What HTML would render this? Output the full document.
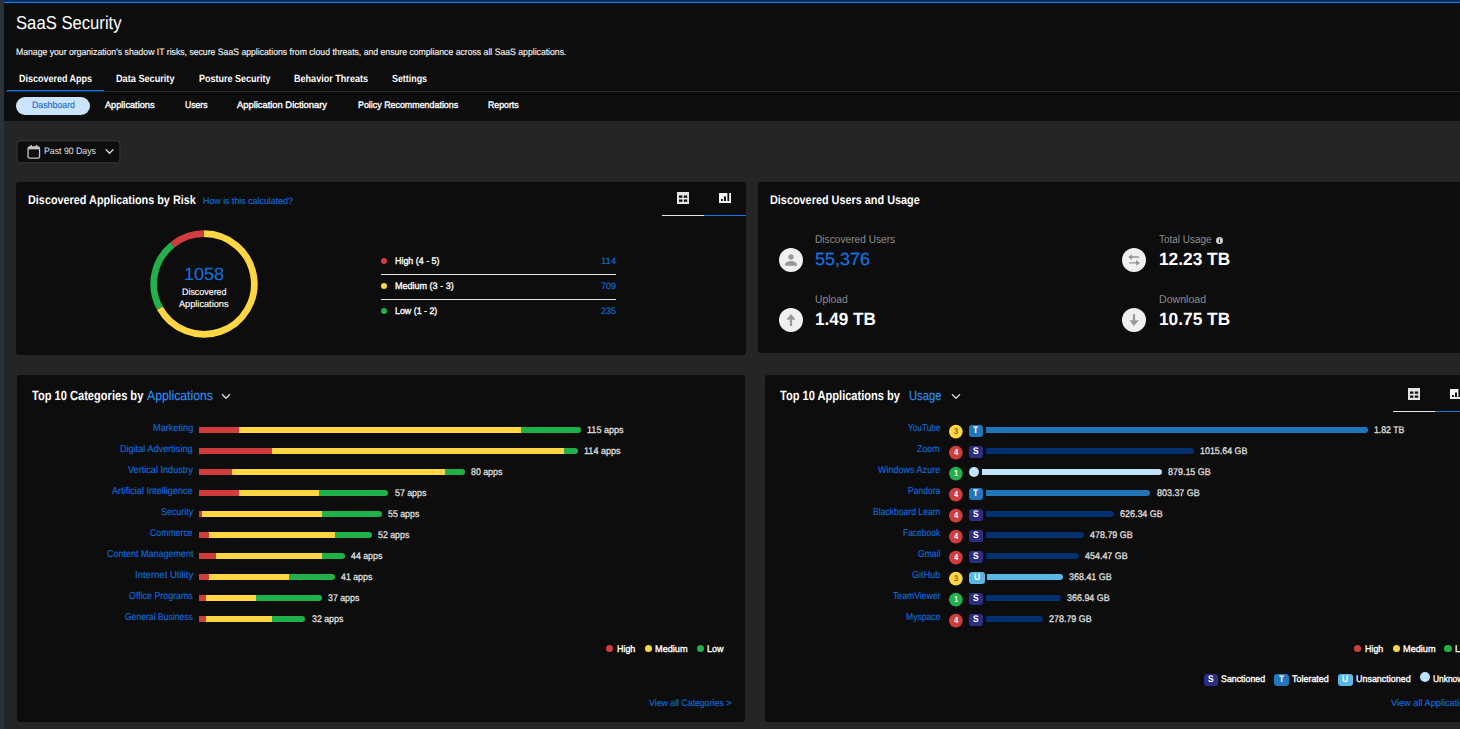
<!DOCTYPE html>
<html lang="en"><head><meta charset="utf-8"><title>SaaS Security</title>
<style>
html,body{margin:0;padding:0;background:#252525;}
body{width:1460px;height:729px;overflow:hidden;position:relative;font-family:"Liberation Sans", sans-serif;}
#app{position:absolute;left:0;top:0;width:1460px;height:729px;overflow:hidden;background:#252525;}
#app>div,#app>svg,#app>span{position:absolute;display:block;}
#app>span{white-space:nowrap;line-height:1;transform-origin:0 0;text-rendering:geometricPrecision;}
</style></head>
<body><div id="app">
<div style="left:0px;top:0px;width:1460px;height:121px;background:#0d0d0d;"></div>
<div style="left:0px;top:0px;width:1460px;height:2px;background:#032f6c;"></div>
<div style="left:0px;top:2px;width:1460px;height:1px;background:#1c80e4;"></div>
<div style="left:0px;top:0px;width:4px;height:729px;background:#2b3138;"></div>
<div style="left:4px;top:91px;width:1456px;height:1px;background:#282828;"></div>
<div style="left:7px;top:90px;width:97px;height:1px;background:#0a72dc;"></div>
<div style="left:7px;top:91px;width:97px;height:1px;background:#123a66;"></div>
<div style="left:16px;top:97px;width:74px;height:18px;background:#cbe3fb;border-radius:9px;"></div>
<svg style="left:16px;top:140px" width="106" height="25" viewBox="0 0 106 25"><rect x="1.1" y="0.9" width="102.8" height="21.9" rx="3.5" fill="#0d0d0d" stroke="#383838" stroke-width="1"/></svg>
<svg style="left:27px;top:144px" width="14" height="16" viewBox="0 0 14 16"><g transform="translate(0.2,0.75)"><rect x="0.85" y="2.2" width="11.5" height="11.2" rx="1.7" fill="none" stroke="#c4c4c4" stroke-width="1.3"/><rect x="0.85" y="2.2" width="11.5" height="2.4" fill="#c4c4c4"/><rect x="3.2" y="0.2" width="1.5" height="2.8" fill="#c4c4c4"/><rect x="8.6" y="0.2" width="1.5" height="2.8" fill="#c4c4c4"/></g></svg>
<svg style="left:104px;top:148px" width="11" height="8" viewBox="0 0 11 8"><path d="M1.7 1.4 L5.55 5.3 L9.4 1.4" fill="none" stroke="#e0e0e0" stroke-width="1.35"/></svg>
<div style="left:16px;top:182px;width:730px;height:173px;background:#0d0d0d;border-radius:3px;"></div>
<svg style="left:677px;top:192px" width="12" height="12" viewBox="0 0 12 12"><path fill="#e4e4e4" fill-rule="evenodd" d="M0 0h12v12H0z M2 3.6h3.4v2.2H2z M6.8 3.6h3.4v2.2H6.8z M2 7.6h3.4v2.2H2z M6.8 7.6h3.4v2.2H6.8z"/></svg>
<svg style="left:719px;top:193px" width="12" height="10" viewBox="0 0 12 10"><path fill="#f4f4f4" fill-rule="evenodd" d="M0 0h12v10H0z M2 6h1.8v2H2z M5 3.6h2v4.4H5z M8.4 0h1.8v8H8.4z"/></svg>
<div style="left:662px;top:215px;width:42px;height:1px;background:#e6e6e6;"></div>
<div style="left:704px;top:215px;width:42px;height:1px;background:#1277e0;"></div>
<svg style="left:144px;top:224px" width="120" height="120" viewBox="0 0 120 120"><path d="M60.00 9.70 A50.3 50.3 0 1 1 15.90 84.20" fill="none" stroke="#fed643" stroke-width="6.7"/><path d="M15.90 84.20 A50.3 50.3 0 0 1 28.49 20.79" fill="none" stroke="#21b14b" stroke-width="6.7"/><path d="M28.49 20.79 A50.3 50.3 0 0 1 59.99 9.70" fill="none" stroke="#d13c3c" stroke-width="6.7"/></svg>
<div style="left:381px;top:257.5px;width:6px;height:6px;background:#d13c3c;border-radius:50%;"></div>
<div style="left:381px;top:282.5px;width:6px;height:6px;background:#fed643;border-radius:50%;"></div>
<div style="left:381px;top:307.5px;width:6px;height:6px;background:#21b14b;border-radius:50%;"></div>
<div style="left:381px;top:274px;width:235px;height:1px;background:#e8e8e8;"></div>
<div style="left:381px;top:299px;width:235px;height:1px;background:#e8e8e8;"></div>
<div style="left:758px;top:182px;width:730px;height:171px;background:#0d0d0d;border-radius:3px;"></div>
<svg style="left:779px;top:248px" width="24" height="24" viewBox="0 0 24 24"><circle cx="12" cy="12" r="12" fill="#f0f0f0"/><circle cx="12" cy="9" r="2.7" fill="#989898"/><path d="M6.1 17.7v-1.2c0-2.3 2.9-3.5 5.9-3.5s5.9 1.2 5.9 3.5v1.2z" fill="#989898"/></svg>
<svg style="left:779px;top:308px" width="24" height="24" viewBox="0 0 24 24"><circle cx="12" cy="12" r="12" fill="#f0f0f0"/><path d="M12 6L16.6 11.7H13.1V17.9H10.9V11.7H7.4Z" fill="#989898"/></svg>
<svg style="left:1122px;top:248px" width="24" height="24" viewBox="0 0 24 24"><circle cx="12" cy="12" r="12" fill="#f0f0f0"/><path d="M6.2 9L9.9 6.2V8.3H16.9V9.7H9.9V11.8Z M17.9 14.9L14.2 12.1V14.2H7.1V15.6H14.2V17.7Z" fill="#929292"/></svg>
<svg style="left:1122px;top:308px" width="24" height="24" viewBox="0 0 24 24"><circle cx="12" cy="12" r="12" fill="#f0f0f0"/><path d="M12 18L16.6 12.3H13.1V6.3H10.9V12.3H7.4Z" fill="#989898"/></svg>
<svg style="left:1216px;top:237px" width="7" height="7" viewBox="0 0 7 7"><circle cx="3.5" cy="3.5" r="3.5" fill="#cfcfcf"/><rect x="3" y="3" width="1" height="2.5" fill="#111"/><rect x="3" y="1.5" width="1" height="1" fill="#111"/></svg>
<div style="left:17px;top:375px;width:728px;height:347px;background:#0d0d0d;border-radius:3px;"></div>
<svg style="left:221px;top:393px" width="10" height="7" viewBox="0 0 10 7"><path d="M1 1.2 L5 5.2 L9 1.2" fill="none" stroke="#d6d6d6" stroke-width="1.4"/></svg>
<div style="left:199px;top:427px;width:382.0px;height:6px;border-radius:0 3px 3px 0;overflow:hidden;background:linear-gradient(90deg,#d13c3c 0,#d13c3c 39.9px,#fed643 39.9px,#fed643 322.2px,#21b14b 322.2px)"></div>
<div style="left:199px;top:448px;width:378.7px;height:6px;border-radius:0 3px 3px 0;overflow:hidden;background:linear-gradient(90deg,#d13c3c 0,#d13c3c 73.1px,#fed643 73.1px,#fed643 365.4px,#21b14b 365.4px)"></div>
<div style="left:199px;top:469px;width:265.7px;height:6px;border-radius:0 3px 3px 0;overflow:hidden;background:linear-gradient(90deg,#d13c3c 0,#d13c3c 33.2px,#fed643 33.2px,#fed643 245.8px,#21b14b 245.8px)"></div>
<div style="left:199px;top:490px;width:189.3px;height:6px;border-radius:0 3px 3px 0;overflow:hidden;background:linear-gradient(90deg,#d13c3c 0,#d13c3c 39.9px,#fed643 39.9px,#fed643 119.6px,#21b14b 119.6px)"></div>
<div style="left:199px;top:511px;width:182.7px;height:6px;border-radius:0 3px 3px 0;overflow:hidden;background:linear-gradient(90deg,#d13c3c 0,#d13c3c 3.3px,#fed643 3.3px,#fed643 122.9px,#21b14b 122.9px)"></div>
<div style="left:199px;top:532px;width:172.7px;height:6px;border-radius:0 3px 3px 0;overflow:hidden;background:linear-gradient(90deg,#d13c3c 0,#d13c3c 10.0px,#fed643 10.0px,#fed643 136.2px,#21b14b 136.2px)"></div>
<div style="left:199px;top:553px;width:146.2px;height:6px;border-radius:0 3px 3px 0;overflow:hidden;background:linear-gradient(90deg,#d13c3c 0,#d13c3c 16.6px,#fed643 16.6px,#fed643 122.9px,#21b14b 122.9px)"></div>
<div style="left:199px;top:574px;width:136.2px;height:6px;border-radius:0 3px 3px 0;overflow:hidden;background:linear-gradient(90deg,#d13c3c 0,#d13c3c 10.0px,#fed643 10.0px,#fed643 89.7px,#21b14b 89.7px)"></div>
<div style="left:199px;top:595px;width:122.9px;height:6px;border-radius:0 3px 3px 0;overflow:hidden;background:linear-gradient(90deg,#d13c3c 0,#d13c3c 6.6px,#fed643 6.6px,#fed643 56.5px,#21b14b 56.5px)"></div>
<div style="left:199px;top:616px;width:106.3px;height:6px;border-radius:0 3px 3px 0;overflow:hidden;background:linear-gradient(90deg,#d13c3c 0,#d13c3c 6.6px,#fed643 6.6px,#fed643 73.1px,#21b14b 73.1px)"></div>
<div style="left:606.0px;top:645.0px;width:7.4px;height:7.4px;background:#d13c3c;border-radius:50%;"></div>
<div style="left:644.8px;top:645.0px;width:7.4px;height:7.4px;background:#fed643;border-radius:50%;"></div>
<div style="left:696.7px;top:645.0px;width:7.4px;height:7.4px;background:#21b14b;border-radius:50%;"></div>
<div style="left:765px;top:375px;width:712px;height:347px;background:#0d0d0d;border-radius:3px;"></div>
<svg style="left:950.5px;top:393px" width="10" height="7" viewBox="0 0 10 7"><path d="M1 1.2 L5 5.2 L9 1.2" fill="none" stroke="#d6d6d6" stroke-width="1.4"/></svg>
<svg style="left:1408px;top:388px" width="12" height="12" viewBox="0 0 12 12"><path fill="#e4e4e4" fill-rule="evenodd" d="M0 0h12v12H0z M2 3.6h3.4v2.2H2z M6.8 3.6h3.4v2.2H6.8z M2 7.6h3.4v2.2H2z M6.8 7.6h3.4v2.2H6.8z"/></svg>
<svg style="left:1450px;top:389px" width="12" height="10" viewBox="0 0 12 10"><path fill="#f4f4f4" fill-rule="evenodd" d="M0 0h12v10H0z M2 6h1.8v2H2z M5 3.6h2v4.4H5z M8.4 0h1.8v8H8.4z"/></svg>
<div style="left:1393px;top:411px;width:42px;height:1px;background:#e6e6e6;"></div>
<div style="left:1435px;top:411px;width:42px;height:1px;background:#1277e0;"></div>
<svg style="left:948px;top:424px" width="16" height="16" viewBox="0 0 16 16"><circle cx="7.85" cy="7.55" r="6.85" fill="#fed643"/></svg>
<div style="left:969px;top:425px;width:14px;height:12px;background:#2277bb;border-radius:3px;"></div>
<div style="left:985.7px;top:427px;width:382.0px;height:6px;background:#2176b8;border-radius:0 3px 3px 0;"></div>
<svg style="left:948px;top:445px" width="16" height="16" viewBox="0 0 16 16"><circle cx="7.85" cy="7.55" r="6.85" fill="#d13c3c"/></svg>
<div style="left:969px;top:446px;width:14px;height:12px;background:#2b2e83;border-radius:3px;"></div>
<div style="left:985.7px;top:448px;width:208.2px;height:6px;background:#03306e;border-radius:0 3px 3px 0;"></div>
<svg style="left:948px;top:466px" width="16" height="16" viewBox="0 0 16 16"><circle cx="7.85" cy="7.55" r="6.85" fill="#21b14b"/></svg>
<div style="left:969px;top:467px;width:10px;height:10px;background:#bfe3fb;border-radius:50%;"></div>
<div style="left:981.7px;top:469px;width:180.2px;height:6px;background:#bfe3fb;border-radius:0 3px 3px 0;"></div>
<svg style="left:948px;top:487px" width="16" height="16" viewBox="0 0 16 16"><circle cx="7.85" cy="7.55" r="6.85" fill="#d13c3c"/></svg>
<div style="left:969px;top:488px;width:14px;height:12px;background:#2277bb;border-radius:3px;"></div>
<div style="left:985.7px;top:490px;width:164.7px;height:6px;background:#2176b8;border-radius:0 3px 3px 0;"></div>
<svg style="left:948px;top:508px" width="16" height="16" viewBox="0 0 16 16"><circle cx="7.85" cy="7.55" r="6.85" fill="#d13c3c"/></svg>
<div style="left:969px;top:509px;width:14px;height:12px;background:#2b2e83;border-radius:3px;"></div>
<div style="left:985.7px;top:511px;width:128.4px;height:6px;background:#03306e;border-radius:0 3px 3px 0;"></div>
<svg style="left:948px;top:529px" width="16" height="16" viewBox="0 0 16 16"><circle cx="7.85" cy="7.55" r="6.85" fill="#d13c3c"/></svg>
<div style="left:969px;top:530px;width:14px;height:12px;background:#2b2e83;border-radius:3px;"></div>
<div style="left:985.7px;top:532px;width:98.1px;height:6px;background:#03306e;border-radius:0 3px 3px 0;"></div>
<svg style="left:948px;top:550px" width="16" height="16" viewBox="0 0 16 16"><circle cx="7.85" cy="7.55" r="6.85" fill="#d13c3c"/></svg>
<div style="left:969px;top:551px;width:14px;height:12px;background:#2b2e83;border-radius:3px;"></div>
<div style="left:985.7px;top:553px;width:93.2px;height:6px;background:#03306e;border-radius:0 3px 3px 0;"></div>
<svg style="left:948px;top:571px" width="16" height="16" viewBox="0 0 16 16"><circle cx="7.85" cy="7.55" r="6.85" fill="#fed643"/></svg>
<div style="left:969px;top:572px;width:16px;height:12px;background:#5bb7e6;border-radius:3px;"></div>
<div style="left:987.3px;top:574px;width:75.5px;height:6px;background:#5bb7e6;border-radius:0 3px 3px 0;"></div>
<svg style="left:948px;top:592px" width="16" height="16" viewBox="0 0 16 16"><circle cx="7.85" cy="7.55" r="6.85" fill="#21b14b"/></svg>
<div style="left:969px;top:593px;width:14px;height:12px;background:#2b2e83;border-radius:3px;"></div>
<div style="left:985.7px;top:595px;width:75.2px;height:6px;background:#03306e;border-radius:0 3px 3px 0;"></div>
<svg style="left:948px;top:613px" width="16" height="16" viewBox="0 0 16 16"><circle cx="7.85" cy="7.55" r="6.85" fill="#d13c3c"/></svg>
<div style="left:969px;top:614px;width:14px;height:12px;background:#2b2e83;border-radius:3px;"></div>
<div style="left:985.7px;top:616px;width:57.1px;height:6px;background:#03306e;border-radius:0 3px 3px 0;"></div>
<div style="left:1353.7px;top:645.0999999999999px;width:7.4px;height:7.4px;background:#d13c3c;border-radius:50%;"></div>
<div style="left:1392.5px;top:645.0999999999999px;width:7.4px;height:7.4px;background:#fed643;border-radius:50%;"></div>
<div style="left:1444.4px;top:645.0999999999999px;width:7.4px;height:7.4px;background:#21b14b;border-radius:50%;"></div>
<div style="left:1204px;top:674px;width:14px;height:12px;background:#2b2e83;border-radius:3px;"></div>
<div style="left:1274px;top:674px;width:15px;height:12px;background:#2277bb;border-radius:3px;"></div>
<div style="left:1338px;top:674px;width:15px;height:12px;background:#5bb7e6;border-radius:3px;"></div>
<div style="left:1420px;top:672px;width:10px;height:10px;background:#bfe3fb;border-radius:50%;"></div>
<span style="left:16.4px;top:14px;font-size:18.6px;color:#ffffff;transform:scaleX(0.896)">SaaS Security</span>
<span style="left:16.4px;top:47px;font-size:9.4px;-webkit-text-stroke:0.15px;color:#f2f2f2;transform:scaleX(0.924)">Manage your organization&#x27;s shadow IT risks, secure SaaS applications from cloud threats, and ensure compliance across all SaaS applications.</span>
<span style="left:19.0px;top:75px;font-size:10.4px;font-weight:700;color:#ffffff;transform:scaleX(0.864)">Discovered Apps</span>
<span style="left:116.0px;top:75px;font-size:10.4px;font-weight:700;color:#ffffff;transform:scaleX(0.881)">Data Security</span>
<span style="left:198.5px;top:75px;font-size:10.4px;font-weight:700;color:#ffffff;transform:scaleX(0.866)">Posture Security</span>
<span style="left:294.0px;top:75px;font-size:10.4px;font-weight:700;color:#ffffff;transform:scaleX(0.872)">Behavior Threats</span>
<span style="left:392.0px;top:75px;font-size:10.4px;font-weight:700;color:#ffffff;transform:scaleX(0.854)">Settings</span>
<span style="left:31.5px;top:100px;font-size:9.4px;-webkit-text-stroke:0.15px;color:#1a6ccc;transform:scaleX(0.937)">Dashboard</span>
<span style="left:104.5px;top:100px;font-size:9.4px;-webkit-text-stroke:0.35px;color:#ffffff;transform:scaleX(0.979)">Applications</span>
<span style="left:184.5px;top:100px;font-size:9.4px;-webkit-text-stroke:0.35px;color:#ffffff;transform:scaleX(0.919)">Users</span>
<span style="left:237.0px;top:100px;font-size:9.4px;-webkit-text-stroke:0.35px;color:#ffffff;transform:scaleX(0.998)">Application Dictionary</span>
<span style="left:357.5px;top:100px;font-size:9.4px;-webkit-text-stroke:0.35px;color:#ffffff;transform:scaleX(0.947)">Policy Recommendations</span>
<span style="left:488.0px;top:100px;font-size:9.4px;-webkit-text-stroke:0.35px;color:#ffffff;transform:scaleX(0.935)">Reports</span>
<span style="left:44.0px;top:146px;font-size:9.4px;color:#e0e0e0;transform:scaleX(0.932)">Past 90 Days</span>
<span style="left:28.1px;top:194px;font-size:12.5px;font-weight:700;color:#ffffff;transform:scaleX(0.868)">Discovered Applications by Risk</span>
<span style="left:202.5px;top:196px;font-size:9.4px;-webkit-text-stroke:0.15px;color:#0d6bdd;transform:scaleX(0.943)">How is this calculated?</span>
<span style="left:183.9px;top:266px;font-size:17.7px;color:#1075e6;transform:scaleX(1.019)">1058</span>
<span style="left:181.8px;top:287px;font-size:9.4px;-webkit-text-stroke:0.15px;color:#ffffff;transform:scaleX(0.949)">Discovered</span>
<span style="left:179.2px;top:299px;font-size:9.4px;-webkit-text-stroke:0.15px;color:#ffffff;transform:scaleX(0.979)">Applications</span>
<span style="left:395.0px;top:256px;font-size:9.4px;-webkit-text-stroke:0.35px;color:#ffffff;transform:scaleX(0.949)">High (4 - 5)</span>
<span style="left:600.5px;top:256px;font-size:9.4px;-webkit-text-stroke:0.15px;color:#0d6bdd;transform:scaleX(1.010)">114</span>
<span style="left:395.0px;top:281px;font-size:9.4px;-webkit-text-stroke:0.35px;color:#ffffff;transform:scaleX(0.963)">Medium (3 - 3)</span>
<span style="left:600.5px;top:281px;font-size:9.4px;-webkit-text-stroke:0.15px;color:#0d6bdd;transform:scaleX(0.964)">709</span>
<span style="left:395.0px;top:306px;font-size:9.4px;-webkit-text-stroke:0.35px;color:#ffffff;transform:scaleX(0.944)">Low (1 - 2)</span>
<span style="left:600.5px;top:306px;font-size:9.4px;-webkit-text-stroke:0.15px;color:#0d6bdd;transform:scaleX(0.964)">235</span>
<span style="left:769.8px;top:194px;font-size:12.5px;font-weight:700;color:#ffffff;transform:scaleX(0.869)">Discovered Users and Usage</span>
<span style="left:815.0px;top:235px;font-size:11.4px;color:#8d8d8d;transform:scaleX(0.892)">Discovered Users</span>
<span style="left:815.0px;top:251px;font-size:17.7px;-webkit-text-stroke:0.15px;color:#1075e6;transform:scaleX(1.016)">55,376</span>
<span style="left:815.0px;top:295px;font-size:11.4px;color:#8d8d8d;transform:scaleX(0.906)">Upload</span>
<span style="left:815.0px;top:311px;font-size:17.7px;font-weight:700;color:#ffffff;transform:scaleX(0.969)">1.49 TB</span>
<span style="left:1159.2px;top:235px;font-size:11.4px;color:#8d8d8d;transform:scaleX(0.874)">Total Usage</span>
<span style="left:1159.2px;top:251px;font-size:17.7px;font-weight:700;color:#ffffff;transform:scaleX(0.978)">12.23 TB</span>
<span style="left:1159.2px;top:295px;font-size:11.4px;color:#8d8d8d;transform:scaleX(0.930)">Download</span>
<span style="left:1159.2px;top:311px;font-size:17.7px;font-weight:700;color:#ffffff;transform:scaleX(0.978)">10.75 TB</span>
<span style="left:32.0px;top:389px;font-size:13.4px;font-weight:700;color:#ffffff;transform:scaleX(0.828)">Top 10 Categories by</span>
<span style="left:147.3px;top:389px;font-size:13.4px;-webkit-text-stroke:0.15px;color:#2f8df5;transform:scaleX(0.913)">Applications</span>
<span style="left:152.7px;top:424px;font-size:10px;-webkit-text-stroke:0.15px;color:#0d6bdd;transform:scaleX(0.918)">Marketing</span>
<span style="left:587.2px;top:426px;font-size:9.6px;-webkit-text-stroke:0.35px;color:#dadada;transform:scaleX(0.942)">115 apps</span>
<span style="left:120.4px;top:445px;font-size:10px;-webkit-text-stroke:0.15px;color:#0d6bdd;transform:scaleX(0.913)">Digital Advertising</span>
<span style="left:583.9px;top:447px;font-size:9.6px;-webkit-text-stroke:0.35px;color:#dadada;transform:scaleX(0.942)">114 apps</span>
<span style="left:128.0px;top:466px;font-size:10px;-webkit-text-stroke:0.15px;color:#0d6bdd;transform:scaleX(0.913)">Vertical Industry</span>
<span style="left:470.9px;top:468px;font-size:9.6px;-webkit-text-stroke:0.35px;color:#dadada;transform:scaleX(0.917)">80 apps</span>
<span style="left:112.3px;top:487px;font-size:10px;-webkit-text-stroke:0.15px;color:#0d6bdd;transform:scaleX(0.913)">Artificial Intelligence</span>
<span style="left:394.5px;top:489px;font-size:9.6px;-webkit-text-stroke:0.35px;color:#dadada;transform:scaleX(0.917)">57 apps</span>
<span style="left:160.8px;top:508px;font-size:10px;-webkit-text-stroke:0.15px;color:#0d6bdd;transform:scaleX(0.891)">Security</span>
<span style="left:387.9px;top:510px;font-size:9.6px;-webkit-text-stroke:0.35px;color:#dadada;transform:scaleX(0.917)">55 apps</span>
<span style="left:150.3px;top:529px;font-size:10px;-webkit-text-stroke:0.15px;color:#0d6bdd;transform:scaleX(0.873)">Commerce</span>
<span style="left:377.9px;top:531px;font-size:9.6px;-webkit-text-stroke:0.35px;color:#dadada;transform:scaleX(0.917)">52 apps</span>
<span style="left:106.5px;top:550px;font-size:10px;-webkit-text-stroke:0.15px;color:#0d6bdd;transform:scaleX(0.899)">Content Management</span>
<span style="left:351.4px;top:552px;font-size:9.6px;-webkit-text-stroke:0.35px;color:#dadada;transform:scaleX(0.917)">44 apps</span>
<span style="left:134.8px;top:571px;font-size:10px;-webkit-text-stroke:0.15px;color:#0d6bdd;transform:scaleX(0.952)">Internet Utility</span>
<span style="left:341.4px;top:573px;font-size:9.6px;-webkit-text-stroke:0.35px;color:#dadada;transform:scaleX(0.917)">41 apps</span>
<span style="left:129.3px;top:592px;font-size:10px;-webkit-text-stroke:0.15px;color:#0d6bdd;transform:scaleX(0.884)">Office Programs</span>
<span style="left:328.1px;top:594px;font-size:9.6px;-webkit-text-stroke:0.35px;color:#dadada;transform:scaleX(0.917)">37 apps</span>
<span style="left:125.2px;top:613px;font-size:10px;-webkit-text-stroke:0.15px;color:#0d6bdd;transform:scaleX(0.859)">General Business</span>
<span style="left:311.5px;top:615px;font-size:9.6px;-webkit-text-stroke:0.35px;color:#dadada;transform:scaleX(0.917)">32 apps</span>
<span style="left:617.0px;top:645px;font-size:9.5px;-webkit-text-stroke:0.35px;color:#ffffff;transform:scaleX(0.936)">High</span>
<span style="left:655.2px;top:645px;font-size:9.5px;-webkit-text-stroke:0.35px;color:#ffffff;transform:scaleX(0.965)">Medium</span>
<span style="left:707.0px;top:645px;font-size:9.5px;-webkit-text-stroke:0.35px;color:#ffffff;transform:scaleX(0.946)">Low</span>
<span style="left:649.4px;top:699px;font-size:9.5px;-webkit-text-stroke:0.15px;color:#0d6bdd;transform:scaleX(0.922)">View all Categories &gt;</span>
<span style="left:779.5px;top:389px;font-size:13.4px;font-weight:700;color:#ffffff;transform:scaleX(0.827)">Top 10 Applications by</span>
<span style="left:909.3px;top:389px;font-size:13.4px;-webkit-text-stroke:0.15px;color:#2f8df5;transform:scaleX(0.837)">Usage</span>
<span style="left:907.5px;top:424px;font-size:10px;-webkit-text-stroke:0.15px;color:#0d6bdd;transform:scaleX(0.827)">YouTube</span>
<span style="left:953.9px;top:427px;font-size:8.6px;font-weight:700;color:#8a6410;transform:scaleX(0.888)">3</span>
<span style="left:973.4px;top:426px;font-size:9.5px;font-weight:700;color:#fff;transform:scaleX(0.888)">T</span>
<span style="left:1374.0px;top:426px;font-size:9.6px;-webkit-text-stroke:0.35px;color:#dadada;transform:scaleX(0.909)">1.82 TB</span>
<span style="left:917.4px;top:445px;font-size:10px;-webkit-text-stroke:0.15px;color:#0d6bdd;transform:scaleX(0.884)">Zoom</span>
<span style="left:953.9px;top:448px;font-size:8.6px;font-weight:700;color:#fff;transform:scaleX(0.888)">4</span>
<span style="left:973.2px;top:447px;font-size:9.5px;font-weight:700;color:#fff;transform:scaleX(0.888)">S</span>
<span style="left:1200.2px;top:447px;font-size:9.6px;-webkit-text-stroke:0.35px;color:#dadada;transform:scaleX(0.927)">1015.64 GB</span>
<span style="left:877.8px;top:466px;font-size:10px;-webkit-text-stroke:0.15px;color:#0d6bdd;transform:scaleX(0.902)">Windows Azure</span>
<span style="left:953.9px;top:469px;font-size:8.6px;font-weight:700;color:#fff;transform:scaleX(0.888)">1</span>
<span style="left:1168.2px;top:468px;font-size:9.6px;-webkit-text-stroke:0.35px;color:#dadada;transform:scaleX(0.931)">879.15 GB</span>
<span style="left:907.8px;top:487px;font-size:10px;-webkit-text-stroke:0.15px;color:#0d6bdd;transform:scaleX(0.852)">Pandora</span>
<span style="left:953.9px;top:490px;font-size:8.6px;font-weight:700;color:#fff;transform:scaleX(0.888)">4</span>
<span style="left:973.4px;top:489px;font-size:9.5px;font-weight:700;color:#fff;transform:scaleX(0.888)">T</span>
<span style="left:1156.7px;top:489px;font-size:9.6px;-webkit-text-stroke:0.35px;color:#dadada;transform:scaleX(0.931)">803.37 GB</span>
<span style="left:872.7px;top:508px;font-size:10px;-webkit-text-stroke:0.15px;color:#0d6bdd;transform:scaleX(0.859)">Blackboard Learn</span>
<span style="left:953.9px;top:511px;font-size:8.6px;font-weight:700;color:#fff;transform:scaleX(0.888)">4</span>
<span style="left:973.2px;top:510px;font-size:9.5px;font-weight:700;color:#fff;transform:scaleX(0.888)">S</span>
<span style="left:1120.4px;top:510px;font-size:9.6px;-webkit-text-stroke:0.35px;color:#dadada;transform:scaleX(0.931)">626.34 GB</span>
<span style="left:902.9px;top:529px;font-size:10px;-webkit-text-stroke:0.15px;color:#0d6bdd;transform:scaleX(0.845)">Facebook</span>
<span style="left:953.9px;top:532px;font-size:8.6px;font-weight:700;color:#fff;transform:scaleX(0.888)">4</span>
<span style="left:973.2px;top:531px;font-size:9.5px;font-weight:700;color:#fff;transform:scaleX(0.888)">S</span>
<span style="left:1090.1px;top:531px;font-size:9.6px;-webkit-text-stroke:0.35px;color:#dadada;transform:scaleX(0.931)">478.79 GB</span>
<span style="left:917.7px;top:550px;font-size:10px;-webkit-text-stroke:0.15px;color:#0d6bdd;transform:scaleX(0.854)">Gmail</span>
<span style="left:953.9px;top:553px;font-size:8.6px;font-weight:700;color:#fff;transform:scaleX(0.888)">4</span>
<span style="left:973.2px;top:552px;font-size:9.5px;font-weight:700;color:#fff;transform:scaleX(0.888)">S</span>
<span style="left:1085.2px;top:552px;font-size:9.6px;-webkit-text-stroke:0.35px;color:#dadada;transform:scaleX(0.931)">454.47 GB</span>
<span style="left:911.6px;top:571px;font-size:10px;-webkit-text-stroke:0.15px;color:#0d6bdd;transform:scaleX(0.912)">GitHub</span>
<span style="left:953.9px;top:574px;font-size:8.6px;font-weight:700;color:#8a6410;transform:scaleX(0.888)">3</span>
<span style="left:973.9px;top:573px;font-size:9.5px;font-weight:700;color:#fff;transform:scaleX(0.888)">U</span>
<span style="left:1069.1px;top:573px;font-size:9.6px;-webkit-text-stroke:0.35px;color:#dadada;transform:scaleX(0.931)">368.41 GB</span>
<span style="left:892.5px;top:592px;font-size:10px;-webkit-text-stroke:0.15px;color:#0d6bdd;transform:scaleX(0.866)">TeamViewer</span>
<span style="left:953.9px;top:595px;font-size:8.6px;font-weight:700;color:#fff;transform:scaleX(0.888)">1</span>
<span style="left:973.2px;top:594px;font-size:9.5px;font-weight:700;color:#fff;transform:scaleX(0.888)">S</span>
<span style="left:1067.2px;top:594px;font-size:9.6px;-webkit-text-stroke:0.35px;color:#dadada;transform:scaleX(0.931)">366.94 GB</span>
<span style="left:905.6px;top:613px;font-size:10px;-webkit-text-stroke:0.15px;color:#0d6bdd;transform:scaleX(0.860)">Myspace</span>
<span style="left:953.9px;top:616px;font-size:8.6px;font-weight:700;color:#fff;transform:scaleX(0.888)">4</span>
<span style="left:973.2px;top:615px;font-size:9.5px;font-weight:700;color:#fff;transform:scaleX(0.888)">S</span>
<span style="left:1049.1px;top:615px;font-size:9.6px;-webkit-text-stroke:0.35px;color:#dadada;transform:scaleX(0.931)">278.79 GB</span>
<span style="left:1364.7px;top:645px;font-size:9.5px;-webkit-text-stroke:0.35px;color:#ffffff;transform:scaleX(0.936)">High</span>
<span style="left:1402.9px;top:645px;font-size:9.5px;-webkit-text-stroke:0.35px;color:#ffffff;transform:scaleX(0.965)">Medium</span>
<span style="left:1454.7px;top:645px;font-size:9.5px;-webkit-text-stroke:0.35px;color:#ffffff;transform:scaleX(0.946)">Low</span>
<span style="left:1208.2px;top:675px;font-size:9.5px;font-weight:700;color:#fff;transform:scaleX(0.888)">S</span>
<span style="left:1221.2px;top:675px;font-size:9.5px;-webkit-text-stroke:0.35px;color:#ffffff;transform:scaleX(0.928)">Sanctioned</span>
<span style="left:1278.9px;top:675px;font-size:9.5px;font-weight:700;color:#fff;transform:scaleX(0.888)">T</span>
<span style="left:1292.2px;top:675px;font-size:9.5px;-webkit-text-stroke:0.35px;color:#ffffff;transform:scaleX(0.941)">Tolerated</span>
<span style="left:1342.4px;top:675px;font-size:9.5px;font-weight:700;color:#fff;transform:scaleX(0.888)">U</span>
<span style="left:1356.4px;top:675px;font-size:9.5px;-webkit-text-stroke:0.35px;color:#ffffff;transform:scaleX(0.940)">Unsanctioned</span>
<span style="left:1432.8px;top:675px;font-size:9.5px;-webkit-text-stroke:0.35px;color:#ffffff;transform:scaleX(0.884)">Unknown</span>
<span style="left:1391.0px;top:699px;font-size:9.5px;-webkit-text-stroke:0.15px;color:#0d6bdd;transform:scaleX(0.967)">View all Applications &gt;</span>
</div></body></html>
